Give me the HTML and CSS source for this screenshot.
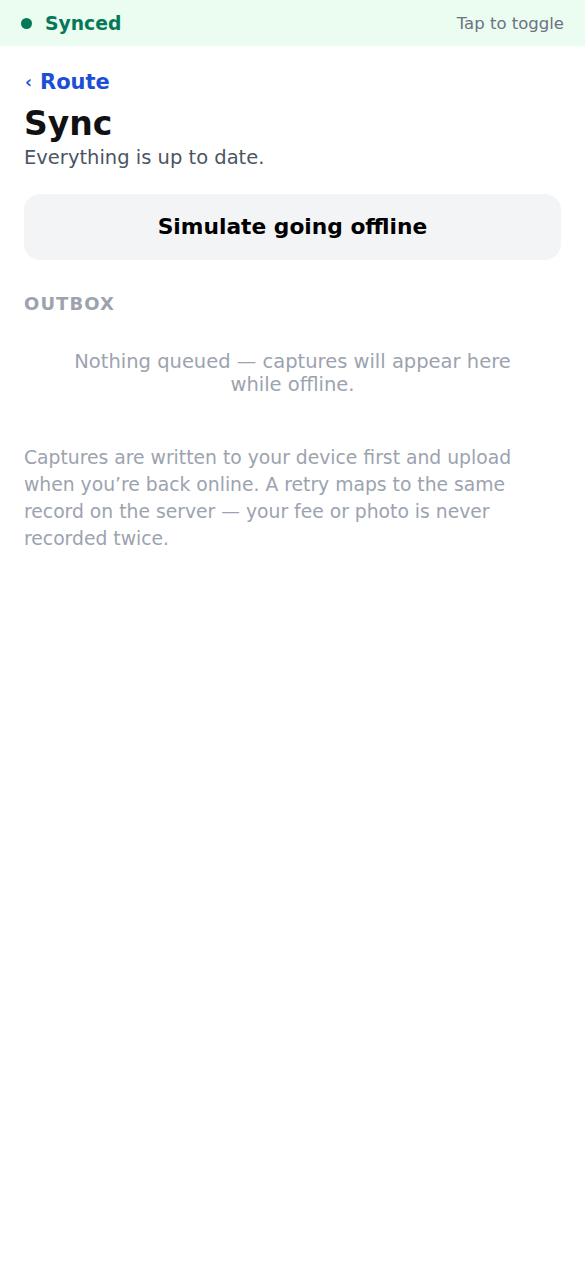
FILE: index.html
```html
<!DOCTYPE html>
<html lang="en">
<head>
<meta charset="utf-8">
<title>Sync</title>
<link rel="stylesheet" href="styles.css">
</head>
<body>
<div class="statusbar">
  <div class="status">
    <span class="dot"></span>
    <span class="status-label">Synced</span>
  </div>
  <span class="toggle">Tap to toggle</span>
</div>
<main class="page">
  <a class="back" href="#"><span class="chev">‹</span> Route</a>
  <h1 class="title">Sync</h1>
  <p class="subtitle">Everything is up to date.</p>
  <button class="btn" type="button">Simulate going offline</button>
  <h2 class="section">OUTBOX</h2>
  <p class="empty">Nothing queued — captures will appear here while offline.</p>
  <p class="note">Captures are written to your device first and upload when you’re back online. A retry maps to the same record on the server — your fee or photo is never recorded twice.</p>
</main>
</body>
</html>
```

FILE: styles.css
```css
* { box-sizing: border-box; }
html, body {
  margin: 0;
  padding: 0;
  background: #ffffff;
  font-family: "DejaVu Sans", sans-serif;
}
.statusbar {
  height: 46px;
  background: #ebfcf1;
  display: flex;
  align-items: center;
  justify-content: space-between;
  padding: 0 21px 0 21px;
}
.status {
  display: flex;
  align-items: center;
  gap: 13px;
}
.dot {
  width: 11px;
  height: 11px;
  border-radius: 50%;
  background: #047857;
}
.status-label {
  font-size: 18.75px;
  font-weight: bold;
  color: #047857;
}
.toggle {
  font-size: 16.5px;
  color: #6b7280;
}
.page {
  padding: 24px 24px 24px;
  display: flex;
  flex-direction: column;
}
.back {
  display: flex;
  align-items: center;
  gap: 8px;
  font-size: 21px;
  font-weight: bold;
  color: #1d4ed8;
  text-decoration: none;
  line-height: 25px;
}
.chev {
  font-size: 17px;
  line-height: 25px;
  padding-left: 1px;
}
.title {
  margin: 10px 0 0;
  font-size: 33px;
  line-height: 38px;
  font-weight: bold;
  color: #111111;
}
.subtitle {
  margin: 3px 0 0;
  font-size: 19.5px;
  line-height: 24px;
  color: #4b5563;
}
.btn {
  margin-top: 24px;
  height: 66px;
  border: none;
  border-radius: 16px;
  background: #f3f4f6;
  font-family: "DejaVu Sans", sans-serif;
  font-size: 21.75px;
  font-weight: bold;
  color: #000000;
  padding: 0 0 2px;
}
.section {
  margin: 33px 0 0;
  font-size: 18px;
  line-height: 22px;
  font-weight: bold;
  letter-spacing: 0.06em;
  color: #9ca3af;
}
.empty {
  margin: 35px 0 0;
  padding: 0 30px;
  text-align: center;
  font-size: 19.5px;
  line-height: 23px;
  color: #9ca3af;
}
.note {
  margin: 48px 0 0;
  font-size: 18.75px;
  line-height: 27px;
  color: #9ca3af;
}
```
